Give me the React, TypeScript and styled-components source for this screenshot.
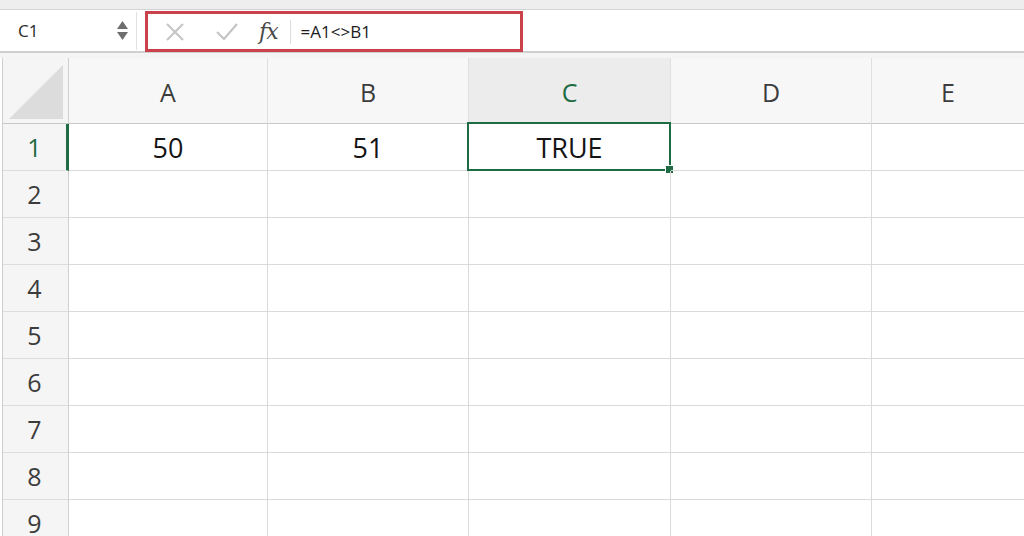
import React from "react";
import styled, { createGlobalStyle } from "styled-components";

const Global = createGlobalStyle`
  html, body { margin: 0; padding: 0; background: #ffffff; }
  body { width: 1024px; height: 536px; overflow: hidden; font-family: "Open Sans", "Noto Sans", sans-serif; }
`;

const Page = styled.div`
  width: 1024px;
  height: 536px;
  display: flex;
  flex-direction: column;
  overflow: hidden;
  background: #ffffff;
`;

const TopStrip = styled.div`
  height: 9px;
  background: #eeeeee;
  border-bottom: 1px solid #d4d4d4;
  flex: none;
`;

const FormulaRow = styled.div`
  height: 41px;
  display: flex;
  align-items: center;
  background: #ffffff;
  flex: none;
  border-bottom: 2px solid #cfcfcf;
`;

const NameBox = styled.div`
  width: 134px;
  height: 38px;
  margin-left: 3px;
  display: flex;
  align-items: center;
  justify-content: space-between;
  padding: 0 8px 0 15px;
  box-sizing: border-box;
  border-right: 1px solid #e2e2e2;
  font-size: 17px;
  color: #2a2a2a;
`;

const Stepper = styled.div`
  display: flex;
  flex-direction: column;
  gap: 3px;
`;

const FormulaBox = styled.div`
  margin-left: 8px;
  width: 378px;
  height: 41px;
  box-sizing: border-box;
  border: 3px solid #c9424b;
  display: flex;
  align-items: center;
  padding-left: 17px;
  margin-top: 2px;
`;

const IconSlot = styled.div<{ $w: number }>`
  width: ${(p) => p.$w}px;
  display: flex;
  align-items: center;
  justify-content: flex-start;
`;

const Fx = styled.span`
  font-family: "DejaVu Serif", "Liberation Serif", serif;
  font-style: italic;
  font-size: 22px;
  color: #4a4a4a;
  letter-spacing: -1px;
  padding-right: 12px;
  border-right: 1px solid #dddddd;
  line-height: 24px;
`;

const FormulaText = styled.span`
  margin-left: 10px;
  font-size: 17px;
  color: #1c1c1c;
`;

const Band = styled.div`
  height: 5px;
  background: #f4f4f4;
  flex: none;
`;

const Grid = styled.div`
  display: grid;
  grid-template-columns: 66px 199px 201px 202px 201px 152px;
  grid-template-rows: 66px repeat(9, 47px);
  flex: none;
  border-left: 1px solid #cfcfcf;
  margin-left: 2px;
`;

const Corner = styled.div`
  background: #f5f5f5;
  border-right: 1px solid #d0d0d0;
  border-bottom: 1px solid #c8c8c8;
  box-sizing: border-box;
  display: flex;
  align-items: flex-end;
  justify-content: flex-end;
  padding: 0 5px 4px 0;
`;

const ColHeader = styled.div<{ $sel?: boolean; $last?: boolean }>`
  background: ${(p) => (p.$sel ? "#ececec" : "#f7f7f7")};
  border-right: ${(p) => (p.$last ? "none" : "1px solid #e0e0e0")};
  border-bottom: 1px solid #c8c8c8;
  box-sizing: border-box;
  display: flex;
  align-items: center;
  justify-content: center;
  font-size: 25px;
  color: ${(p) => (p.$sel ? "#1e6b44" : "#3c3c3c")};
  padding-top: 2px;
`;

const RowHeader = styled.div<{ $sel?: boolean }>`
  background: #f5f5f5;
  border-right: ${(p) => (p.$sel ? "3px solid #1e6b44" : "1px solid #d0d0d0")};
  border-bottom: 1px solid #dcdcdc;
  box-sizing: border-box;
  display: flex;
  align-items: center;
  justify-content: center;
  padding-right: ${(p) => (p.$sel ? "0px" : "2px")};
  font-size: 25px;
  color: ${(p) => (p.$sel ? "#1e6b44" : "#3c3c3c")};
`;

const Cell = styled.div<{ $last?: boolean }>`
  border-right: ${(p) => (p.$last ? "none" : "1px solid #dadada")};
  border-bottom: 1px solid #dadada;
  box-sizing: border-box;
  display: flex;
  align-items: center;
  justify-content: center;
  font-size: 27px;
  color: #141414;
  position: relative;
  padding-top: 1px;
`;

const Selection = styled.div`
  position: absolute;
  left: -2px;
  top: -2px;
  right: -1px;
  bottom: -1px;
  border: 2px solid #1e6b44;
  pointer-events: none;
`;

const Handle = styled.div`
  position: absolute;
  right: -5px;
  bottom: -5px;
  width: 7px;
  height: 7px;
  background: #1e6b44;
  border: 1px solid #ffffff;
`;

const cols = ["A", "B", "C", "D", "E"];
const data: Record<string, string> = { A1: "50", B1: "51", C1: "TRUE" };

export default function App() {
  const rows = [1, 2, 3, 4, 5, 6, 7, 8, 9];
  return (
    <Page>
      <Global />
      <TopStrip />
      <FormulaRow>
        <NameBox>
          <span>C1</span>
          <Stepper>
            <svg width="11" height="8" viewBox="0 0 11 8">
              <polygon points="5.5,0 11,8 0,8" fill="#6e6e6e" />
            </svg>
            <svg width="11" height="8" viewBox="0 0 11 8">
              <polygon points="0,0 11,0 5.5,8" fill="#6e6e6e" />
            </svg>
          </Stepper>
        </NameBox>
        <FormulaBox>
          <IconSlot $w={50}>
            <svg width="20" height="20" viewBox="0 0 20 20">
              <path d="M2 2 L18 18 M18 2 L2 18" stroke="#c4c4c4" strokeWidth="2" fill="none" />
            </svg>
          </IconSlot>
          <IconSlot $w={44}>
            <svg width="24" height="20" viewBox="0 0 24 20">
              <path d="M2 10 L9 17 L22 2" stroke="#c4c4c4" strokeWidth="2.2" fill="none" />
            </svg>
          </IconSlot>
          <Fx>fx</Fx>
          <FormulaText>=A1&lt;&gt;B1</FormulaText>
        </FormulaBox>
      </FormulaRow>
      <Band />
      <Grid>
        <Corner>
          <svg width="54" height="54" viewBox="0 0 54 54">
            <polygon points="54,0 54,54 0,54" fill="#dcdcdc" />
          </svg>
        </Corner>
        {cols.map((c) => (
          <ColHeader key={c} $sel={c === "C"} $last={c === "E"}>
            {c}
          </ColHeader>
        ))}
        {rows.map((r) => (
          <React.Fragment key={r}>
            <RowHeader $sel={r === 1}>{r}</RowHeader>
            {cols.map((c) => {
              const id = `${c}${r}`;
              return (
                <Cell key={id} $last={c === "E"}>
                  {data[id] ?? ""}
                  {id === "C1" && (
                    <Selection>
                      <Handle />
                    </Selection>
                  )}
                </Cell>
              );
            })}
          </React.Fragment>
        ))}
      </Grid>
    </Page>
  );
}
